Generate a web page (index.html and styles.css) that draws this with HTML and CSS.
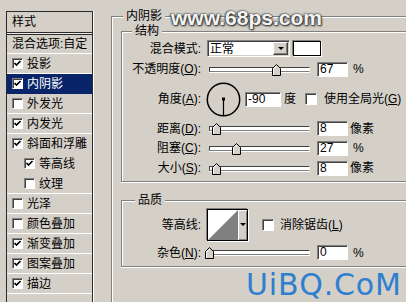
FILE: index.html
```html
<!DOCTYPE html>
<html lang="zh-CN">
<head>
<meta charset="utf-8">
<title>图层样式 - 内阴影</title>
<link rel="stylesheet" href="styles.css">
</head>
<body>
<div class="dialog">
  <nav class="styles">
    <div class="styles-head">样式</div>
    <div class="styles-sep"></div>
    <div class="styles-row blend">混合选项:自定</div>
    <div class="styles-row"><span class="cb"><svg viewBox="0 0 9 9"><polyline points="1.5,4 3.5,6 7.5,2"/></svg></span>投影</div>
    <div class="styles-row selected"><span class="cb"><svg viewBox="0 0 9 9"><polyline points="1.5,4 3.5,6 7.5,2"/></svg></span>内阴影</div>
    <div class="styles-row"><span class="cb"></span>外发光</div>
    <div class="styles-row"><span class="cb"><svg viewBox="0 0 9 9"><polyline points="1.5,4 3.5,6 7.5,2"/></svg></span>内发光</div>
    <div class="styles-row nosep"><span class="cb"><svg viewBox="0 0 9 9"><polyline points="1.5,4 3.5,6 7.5,2"/></svg></span>斜面和浮雕</div>
    <div class="styles-row sub nosep"><span class="cb"><svg viewBox="0 0 9 9"><polyline points="1.5,4 3.5,6 7.5,2"/></svg></span>等高线</div>
    <div class="styles-row sub"><span class="cb"></span>纹理</div>
    <div class="styles-row"><span class="cb"></span>光泽</div>
    <div class="styles-row"><span class="cb"></span>颜色叠加</div>
    <div class="styles-row"><span class="cb"><svg viewBox="0 0 9 9"><polyline points="1.5,4 3.5,6 7.5,2"/></svg></span>渐变叠加</div>
    <div class="styles-row"><span class="cb"><svg viewBox="0 0 9 9"><polyline points="1.5,4 3.5,6 7.5,2"/></svg></span>图案叠加</div>
    <div class="styles-row"><span class="cb"><svg viewBox="0 0 9 9"><polyline points="1.5,4 3.5,6 7.5,2"/></svg></span>描边</div>
  </nav>

  <fieldset class="effect">
    <legend>内阴影</legend>

    <fieldset class="group structure">
      <legend>结构</legend>
      <div class="row h21">
        <span class="lbl">混合模式:</span>
        <span class="select"><span class="select-val">正常</span><span class="dd-btn"><i class="tri"></i></span></span>
        <span class="swatch"></span>
      </div>
      <div class="row h20">
        <span class="lbl">不透明度(<u>O</u>):</span>
        <span class="slider"><svg class="thumb" style="left:62px" viewBox="0 0 9 12"><polygon points="4.5,0.5 8.5,4.5 8.5,11.5 0.5,11.5 0.5,4.5"/><polyline class="hl" points="1.5,11 1.5,5 4.5,2"/></svg></span>
        <span class="field">67</span>
        <span class="unit pct">%</span>
      </div>
      <div class="row h40">
        <span class="lbl">角度(<u>A</u>):</span>
        <svg class="dial" viewBox="0 0 35 35"><circle cx="17.5" cy="17.5" r="16.2"/><line x1="17.5" y1="17" x2="17.5" y2="33.5"/><rect x="16" y="15.5" width="3" height="3"/></svg>
        <span class="field angle">-90</span>
        <span class="unit deg">度</span>
        <span class="chk global"></span>
        <span>使用全局光(<u>G</u>)</span>
      </div>
      <div class="row h19">
        <span class="lbl">距离(<u>D</u>):</span>
        <span class="slider"><svg class="thumb" style="left:2px" viewBox="0 0 9 12"><polygon points="4.5,0.5 8.5,4.5 8.5,11.5 0.5,11.5 0.5,4.5"/><polyline class="hl" points="1.5,11 1.5,5 4.5,2"/></svg></span>
        <span class="field">8</span>
        <span class="unit px">像素</span>
      </div>
      <div class="row h20">
        <span class="lbl">阻塞(<u>C</u>):</span>
        <span class="slider"><svg class="thumb" style="left:22px" viewBox="0 0 9 12"><polygon points="4.5,0.5 8.5,4.5 8.5,11.5 0.5,11.5 0.5,4.5"/><polyline class="hl" points="1.5,11 1.5,5 4.5,2"/></svg></span>
        <span class="field">27</span>
        <span class="unit pct">%</span>
      </div>
      <div class="row h20">
        <span class="lbl">大小(<u>S</u>):</span>
        <span class="slider"><svg class="thumb" style="left:2px" viewBox="0 0 9 12"><polygon points="4.5,0.5 8.5,4.5 8.5,11.5 0.5,11.5 0.5,4.5"/><polyline class="hl" points="1.5,11 1.5,5 4.5,2"/></svg></span>
        <span class="field">8</span>
        <span class="unit px">像素</span>
      </div>
    </fieldset>

    <fieldset class="group quality">
      <legend>品质</legend>
      <div class="row h35">
        <span class="lbl">等高线:</span>
        <span class="contour"><svg class="curve" viewBox="0 0 30 30"><rect width="30" height="30" fill="#fff"/><polygon points="0,30 30,0 30,30" fill="#808080"/></svg><span class="contour-btn"><i class="tri"></i></span></span>
        <span class="chk aa"></span>
        <span>消除锯齿(<u>L</u>)</span>
      </div>
      <div class="row h21">
        <span class="lbl">杂色(<u>N</u>):</span>
        <span class="slider"><svg class="thumb" style="left:-5px" viewBox="0 0 9 12"><polygon points="4.5,0.5 8.5,4.5 8.5,11.5 0.5,11.5 0.5,4.5"/><polyline class="hl" points="1.5,11 1.5,5 4.5,2"/></svg></span>
        <span class="field">0</span>
        <span class="unit pct">%</span>
      </div>
    </fieldset>
  </fieldset>
</div>

<div class="wm-top">www.68ps.com</div>
<div class="wm-bottom">UiBQ.CoM</div>
</body>
</html>
```

FILE: styles.css
```css
* { box-sizing: border-box; }

html, body {
  margin: 0;
  overflow: hidden;
}

body {
  position: relative;
  width: 406px;
  height: 302px;
  background: #d4d0c8;
  color: #000;
  font-family: "Liberation Sans", "Noto Sans CJK SC", sans-serif;
  font-size: 12px;
  line-height: 14px;
}

.dialog {
  display: flex;
  align-items: flex-start;
  height: 302px;
  overflow: hidden;
}

/* ---------- left style list ---------- */
.styles {
  flex: none;
  width: 87px;
  height: 291px;
  margin: 11px 0 0 6px;
  border: 1px solid #2a2a2a;
  border-bottom: 0;
  box-shadow: 1px 0 0 #fff;
}

.styles-head {
  height: 21px;
  line-height: 20px;
  padding-left: 5px;
  border-bottom: 1px solid #2a2a2a;
}

.styles-sep {
  height: 2px;
  background: #ecebe8;
  border-bottom: 1px solid #2a2a2a;
}

.styles-row {
  display: flex;
  align-items: center;
  gap: 4px;
  height: 20px;
  padding-left: 5px;
  border-bottom: 1px solid #fff;
  white-space: nowrap;
}

.styles-row.blend { height: 19px; }
.styles-row.sub { padding-left: 17px; }
.styles-row.nosep { border-bottom-color: transparent; }

.styles-row.selected {
  background: #0a246a;
  color: #fff;
  border-bottom-color: #0a246a;
}

.cb {
  flex: none;
  display: flex;
  width: 11px;
  height: 11px;
  background: #fff;
  border: 1px solid;
  border-color: #808080 #fff #fff #808080;
  box-shadow: inset 1px 1px 0 #404040;
}

.cb svg {
  width: 9px;
  height: 9px;
}

.cb polyline {
  fill: none;
  stroke: #000;
  stroke-width: 1.7;
}

/* ---------- group boxes (cropped at right / bottom) ---------- */
.effect {
  flex: none;
  width: 295px;
  height: 293px;
  min-width: 0;
  margin: 9px 0 0 18px;
  padding: 1px 0 0 9px;
  border: 1px solid #808080;
  border-right: 0;
  border-bottom: 0;
  box-shadow: inset 1px 1px 0 #fff;
}

.effect > legend {
  margin-left: 2px;
  padding: 0 3px;
  line-height: 14px;
  background: #d4d0c8;
}

.group {
  width: 285px;
  min-width: 0;
  margin: 0;
  padding: 0 0 3px 0;
  border: 1px solid #808080;
  border-right: 0;
  box-shadow: inset 1px 1px 0 #fff, 0 1px 0 #fff;
}

.group > legend {
  padding: 0 3px;
  line-height: 14px;
  background: #d4d0c8;
}

.structure > legend { margin-left: 10px; }

.quality { margin-top: 11px; }
.quality > legend { margin-left: 13px; }

.row {
  display: flex;
  align-items: center;
  white-space: nowrap;
}

.h19 { height: 19px; }
.h20 { height: 20px; }
.h21 { height: 21px; }
.h35 { height: 35px; }
.h40 { height: 40px; }

.lbl {
  flex: none;
  width: 79px;
  margin-right: 6px;
  text-align: right;
}

/* dropdown */
.select {
  display: flex;
  align-items: center;
  width: 83px;
  height: 17px;
  padding: 0 1px;
  background: #fff;
  border: 1px solid;
  border-color: #808080 #fff #fff #808080;
  box-shadow: inset 1px 1px 0 #404040, inset -1px -1px 0 #d4d0c8;
}

.select-val { padding-left: 1px; }

.dd-btn {
  display: flex;
  align-items: center;
  justify-content: center;
  width: 15px;
  height: 13px;
  margin-left: auto;
  background: #d4d0c8;
  border: 1px solid;
  border-color: #fff #404040 #404040 #fff;
  box-shadow: inset -1px -1px 0 #808080;
}

.tri {
  display: block;
  width: 0;
  height: 0;
  border-left: 3px solid transparent;
  border-right: 3px solid transparent;
  border-top: 3px solid #000;
}

.swatch {
  width: 28px;
  height: 15px;
  margin-left: 3px;
  background: #fff;
  border: 1px solid #000;
  box-shadow: 1px 1px 0 #fff, -1px -1px 0 #808080;
}

/* slider */
.slider {
  position: relative;
  flex: none;
  width: 101px;
  height: 5px;
  margin-left: 2px;
  background: #fff;
  border: 1px solid;
  border-color: #404040 #fff #808080 #404040;
  box-shadow: 0 1px 0 #fff;
}

.thumb {
  position: absolute;
  top: -4px;
  width: 9px;
  height: 12px;
}

.thumb polygon {
  fill: #d4d0c8;
  stroke: #000;
  stroke-width: 1;
}

.thumb .hl {
  fill: none;
  stroke: #fff;
  stroke-width: 1;
}

/* text field */
.field {
  flex: none;
  width: 31px;
  height: 15px;
  margin-left: 7px;
  padding-left: 2px;
  line-height: 13px;
  background: #fff;
  border: 1px solid;
  border-color: #808080 #fff #fff #808080;
  box-shadow: inset 1px 1px 0 #404040;
}

.field.angle {
  width: 36px;
  margin-left: 4px;
}

.unit.pct { margin-left: 5px; }
.unit.px { margin-left: 2px; }
.unit.deg { margin-left: 3px; }

/* angle dial */
.dial {
  flex: none;
  width: 35px;
  height: 35px;
  margin-left: -1px;
}

.dial circle {
  fill: none;
  stroke: #000;
  stroke-width: 1.5;
}

.dial line {
  stroke: #000;
  stroke-width: 1.2;
}

/* plain checkbox */
.chk {
  flex: none;
  width: 12px;
  height: 12px;
  background: #fff;
  border: 1px solid;
  border-color: #808080 #fff #fff #808080;
  box-shadow: inset 1px 1px 0 #404040;
}

.chk.global { margin: 0 7px 0 9px; }
.chk.aa { margin: 0 6px 0 14px; }

/* contour picker */
.contour {
  display: flex;
  width: 41px;
  height: 32px;
  border: 1px solid #000;
  box-shadow: 1px 1px 0 #fff, -1px -1px 0 #808080;
}

.curve {
  width: 30px;
  height: 30px;
}

.contour-btn {
  display: flex;
  align-items: center;
  justify-content: center;
  flex: 1;
  background: #d4d0c8;
  box-shadow: inset 1px 1px 0 #fff, inset -1px -1px 0 #808080;
}

/* watermarks */
.wm-top {
  position: absolute;
  left: 171px;
  top: 6px;
  font: bold 21px/24px "Liberation Sans", sans-serif;
  color: #f4f4f4;
  text-shadow: 0 0 2px #333, 1px 1px 2px #222, -1px 0 2px #555;
}

.wm-bottom {
  position: absolute;
  left: 246px;
  top: 267px;
  font: 30px/35px "DejaVu Sans", sans-serif;
  letter-spacing: 0.8px;
  color: #2f7fd0;
}
```
